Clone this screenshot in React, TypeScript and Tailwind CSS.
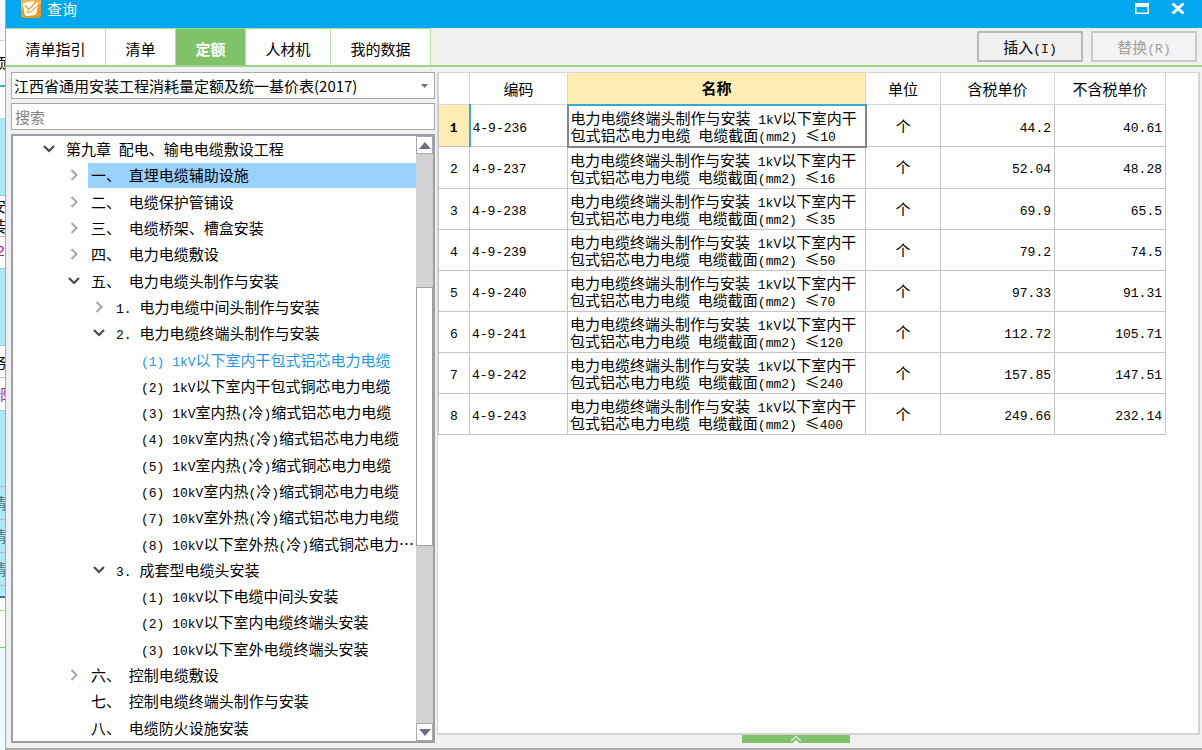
import React, { useState } from "react";

const ASCII_RUN = /([\x20-\x7e]+)/;

/** Mixed text: Chinese in the page font, Latin runs in a half-width mono face. */
function Mixed({ text }: { text: string }) {
  return (
    <span className="whitespace-pre">
      {text.split(ASCII_RUN).map((part, i) =>
        i % 2 === 1 ? (
          <span key={i} className="font-['Liberation_Mono',monospace] text-[13px] leading-[10px]">
            {part}
          </span>
        ) : (
          part
        ),
      )}
    </span>
  );
}

const TABS = [
  { name: "清单指引", width: "w-[100px]" },
  { name: "清单", width: "w-[70px]" },
  { name: "定额", width: "w-[70px]" },
  { name: "人材机", width: "w-[85px]" },
  { name: "我的数据", width: "w-[100px]" },
];

type Node = { level: number; text: string; state?: "open" | "closed" };

const NODES: Node[] = [
  { level: 0, text: "第九章 配电、输电电缆敷设工程", state: "open" },
  { level: 1, text: "一、 直埋电缆辅助设施", state: "closed" },
  { level: 1, text: "二、 电缆保护管铺设", state: "closed" },
  { level: 1, text: "三、 电缆桥架、槽盒安装", state: "closed" },
  { level: 1, text: "四、 电力电缆敷设", state: "closed" },
  { level: 1, text: "五、 电力电缆头制作与安装", state: "open" },
  { level: 2, text: "1. 电力电缆中间头制作与安装", state: "closed" },
  { level: 2, text: "2. 电力电缆终端头制作与安装", state: "open" },
  { level: 3, text: "(1) 1kV以下室内干包式铝芯电力电缆" },
  { level: 3, text: "(2) 1kV以下室内干包式铜芯电力电缆" },
  { level: 3, text: "(3) 1kV室内热(冷)缩式铝芯电力电缆" },
  { level: 3, text: "(4) 10kV室内热(冷)缩式铝芯电力电缆" },
  { level: 3, text: "(5) 1kV室内热(冷)缩式铜芯电力电缆" },
  { level: 3, text: "(6) 10kV室内热(冷)缩式铜芯电力电缆" },
  { level: 3, text: "(7) 10kV室外热(冷)缩式铝芯电力电缆" },
  { level: 3, text: "(8) 10kV以下室外热(冷)缩式铜芯电力…" },
  { level: 2, text: "3. 成套型电缆头安装", state: "open" },
  { level: 3, text: "(1) 10kV以下电缆中间头安装" },
  { level: 3, text: "(2) 10kV以下室内电缆终端头安装" },
  { level: 3, text: "(3) 10kV以下室外电缆终端头安装" },
  { level: 1, text: "六、 控制电缆敷设", state: "closed" },
  { level: 1, text: "七、 控制电缆终端头制作与安装" },
  { level: 1, text: "八、 电缆防火设施安装" },
];

const INDENT = ["pl-[28px]", "pl-[53px]", "pl-[78px]", "pl-[103px]"];

const ROWS = [
  { code: "4-9-236", size: "10", taxed: "44.2", untaxed: "40.61" },
  { code: "4-9-237", size: "16", taxed: "52.04", untaxed: "48.28" },
  { code: "4-9-238", size: "35", taxed: "69.9", untaxed: "65.5" },
  { code: "4-9-239", size: "50", taxed: "79.2", untaxed: "74.5" },
  { code: "4-9-240", size: "70", taxed: "97.33", untaxed: "91.31" },
  { code: "4-9-241", size: "120", taxed: "112.72", untaxed: "105.71" },
  { code: "4-9-242", size: "240", taxed: "157.85", untaxed: "147.51" },
  { code: "4-9-243", size: "400", taxed: "249.66", untaxed: "232.14" },
];

/** Edge of the worksheet that stays visible behind the dialog. */
function Backdrop() {
  const line = "shrink-0 overflow-hidden border-b flex items-center whitespace-nowrap text-[15px]";
  return (
    <div className="flex w-[5px] shrink-0 flex-col overflow-hidden bg-white" aria-hidden="true">
      <div className={`${line} h-[41px] border-[#d0d0d0] bg-[#f6f8fb]`} />
      <div className={`${line} h-[46px] border-b-2 border-[#35a9dc]`}>
        <span className="-ml-2">项</span>
      </div>
      <div className={`${line} h-[32px] border-[#d0d0d0]`} />
      <div className={`${line} h-[77px] border-[#b8b8b8] bg-[#aee8fb]`} />
      <div className={`${line} h-[41px] flex-col justify-center border-[#b8b8b8]`}>
        <span className="-ml-2">安</span>
        <span className="-ml-2">装</span>
      </div>
      <div className={`${line} h-[32px] border-[#b8b8b8] font-['Liberation_Mono',monospace] text-[#a020a0]`}>
        <span className="-ml-1">25</span>
      </div>
      <div className={`${line} h-[77px] border-[#b8b8b8] bg-[#aee8fb]`} />
      <div className={`${line} h-[32px] border-[#b8b8b8]`}>
        <span className="-ml-2">务</span>
      </div>
      <div className={`${line} h-[33px] border-[#b8b8b8] text-[#a020a0]`}>
        <span className="-ml-2">部</span>
      </div>
      <div className={`${line} h-[76px] border-[#b8b8b8] bg-[#aee8fb]`} />
      {[0, 1, 2].map((i) => (
        <div key={i} className={`${line} h-[33px] border-[#b8b8b8] bg-[#aee8fb] text-[#4b7683]`}>
          <span className="-ml-2">清</span>
        </div>
      ))}
      <div className={`${line} h-[12px] border-b-2 border-[#3f7482] bg-[#aee8fb]`} />
      <div className={`${line} h-[13px] border-[#9ed98d]`} />
      <div className={`${line} h-[37px] border-[#8ccb7a]`} />
      <div className="flex-1 bg-[#eefbff]" />
    </div>
  );
}

function TitleBar() {
  return (
    <header className="flex h-7 shrink-0 items-start bg-[#00a8f0] pr-4 pl-[15px] text-white">
      <svg width="20" height="18" viewBox="0 0 20 18" aria-hidden="true">
        <path d="M0 0H20V15Q20 18 17 18H3Q0 18 0 15Z" fill="#f79a1a" />
        <path d="M0 0H20V5Q10 3 0 9Z" fill="#fbb744" />
        <path d="M2 3.500L12 1L17 5L15.500 13Q15 15 13 15.200L6 16Q4 16 3.500 14Z" fill="#fff" />
        <path d="M4 5L7.500 9.500L17 0" fill="none" stroke="#f79a1a" strokeWidth="1.200" />
        <path d="M6.500 13L7.500 10L16 1.500L18.500 3.500L10 12Z" fill="#fff" stroke="#f79a1a" strokeWidth="1" />
      </svg>
      <h1 className="ml-1.5 text-[15px] leading-[18px]">查询</h1>
      <div className="ml-auto flex gap-[20px] pt-0.5">
        <button type="button" aria-label="还原" className="flex h-3 w-4 items-center justify-center">
          <svg width="14" height="11" viewBox="0 0 14 11">
            <path d="M0 0H14V11H0ZM1.500 4V9.500H12.500V4Z" fill="#fff" fillRule="evenodd" />
          </svg>
        </button>
        <button type="button" aria-label="关闭" className="flex h-3 w-4 items-center justify-center">
          <svg width="14" height="11" viewBox="0 0 14 11">
            <path d="M1.500 0.500L12.500 10.500M12.500 0.500L1.500 10.500" stroke="#fff" strokeWidth="3" />
          </svg>
        </button>
      </div>
    </header>
  );
}

function TabBar() {
  const [active, setActive] = useState(2);
  const action = "h-[31px] w-[106px] border-2";
  return (
    <div className="flex shrink-0 border-b-2 border-[#9bd589] bg-[#f0f0f0] pr-[5px]">
      <div role="tablist" className="flex h-[37px] border-t border-[#a8dd99]">
        {TABS.map((tab, i) => (
          <button
            key={tab.name}
            type="button"
            role="tab"
            aria-selected={i === active}
            onClick={() => setActive(i)}
            className={`${tab.width} border-r border-[#b0e0a2] pt-1 ${
              i === active ? "bg-[#80c269] font-bold text-white" : "bg-white"
            }`}
          >
            {tab.name}
          </button>
        ))}
      </div>
      <div className="ml-auto flex items-center gap-2">
        <button type="button" className={`${action} border-[#b9b9b9]`}>
          <Mixed text="插入(I)" />
        </button>
        <button type="button" disabled className={`${action} border-[#cacaca] bg-[#f3f3f3] text-[#a0a0a0]`}>
          <Mixed text="替换(R)" />
        </button>
      </div>
    </div>
  );
}

function Chevron({ open }: { open: boolean }) {
  return open ? (
    <svg width="12" height="8" viewBox="0 0 12 8" aria-hidden="true">
      <path d="M1 1L6 6L11 1" fill="none" stroke="#4a4a4a" strokeWidth="2.200" />
    </svg>
  ) : (
    <svg width="8" height="12" viewBox="0 0 8 12" aria-hidden="true">
      <path d="M1.500 1L6.500 6L1.500 11" fill="none" stroke="#a6a6a6" strokeWidth="2" />
    </svg>
  );
}

function ScrollBar() {
  const cap = "flex h-[18px] w-full shrink-0 items-center justify-center border border-[#aaaaaa] bg-white";
  return (
    <div className="flex w-[17px] shrink-0 flex-col bg-[#d2d2d2]">
      <button type="button" aria-label="向上滚动" className={cap}>
        <svg width="12" height="7" viewBox="0 0 12 7">
          <path d="M6 0L12 7H0Z" fill="#6b7080" />
        </svg>
      </button>
      <div className="flex-[134]" />
      <div className="flex-[258] border border-[#a0a0a0] bg-white" />
      <div className="flex-[178]" />
      <button type="button" aria-label="向下滚动" className={cap}>
        <svg width="12" height="7" viewBox="0 0 12 7">
          <path d="M0 0H12L6 7Z" fill="#6b7080" />
        </svg>
      </button>
    </div>
  );
}

function Catalogue() {
  const [selected, setSelected] = useState(1);
  return (
    <aside className="flex w-[424px] shrink-0 flex-col gap-1 pt-[5px] pb-[5px]">
      <div className="relative">
        <select
          aria-label="定额库"
          className="block h-[27px] w-full appearance-none border border-[#a8a8a8] bg-white pl-0.5 outline-none"
        >
          <option>江西省通用安装工程消耗量定额及统一基价表(2017)</option>
        </select>
        <svg
          width="7"
          height="4"
          viewBox="0 0 7 4"
          className="pointer-events-none absolute top-3 right-[7px]"
          aria-hidden="true"
        >
          <path d="M0 0H7L3.500 4Z" fill="#6b7080" />
        </svg>
      </div>
      <input
        type="text"
        aria-label="搜索"
        placeholder="搜索"
        className="h-[27px] w-full border border-[#a8a8a8] bg-white px-[3px] outline-none placeholder:text-[#858585]"
      />
      <div className="flex flex-1 border-2 border-[#9a9fa8] bg-white">
        <ul role="tree" aria-label="定额目录" className="flex min-w-0 flex-1 flex-col">
          {NODES.map((node, i) => (
            <li
              key={i}
              role="treeitem"
              aria-level={node.level + 1}
              aria-selected={i === selected}
              aria-expanded={node.state ? node.state === "open" : undefined}
              className={`${INDENT[node.level]} flex flex-1 items-center gap-1.5`}
            >
              <span className="flex w-4 shrink-0 items-center justify-center">
                {node.state && <Chevron open={node.state === "open"} />}
              </span>
              <button
                type="button"
                onClick={() => setSelected(i)}
                className={`h-[25px] flex-1 overflow-hidden px-[3px] text-left ${
                  i === selected ? "bg-[#99d1ff]" : ""
                } ${i === 8 ? "text-[#1e96f0]" : ""}`}
              >
                <Mixed text={node.text} />
              </button>
            </li>
          ))}
        </ul>
        <ScrollBar />
      </div>
    </aside>
  );
}

function QuotaTable() {
  const cell = "border border-[#c4c4c4] p-0";
  const head = "border border-[#d6d6d6] p-0 font-normal";
  return (
    <main className="flex min-w-0 flex-1 flex-col pt-[5px]">
      <div className="flex-1 border border-r-2 border-b-2 border-[#d4d4d4] bg-white pr-8">
        <table className="-mt-px h-[363px] w-full table-fixed border-collapse">
          <colgroup>
            <col className="w-[31px]" />
            <col className="w-[98px]" />
            <col />
            <col className="w-[75px]" />
            <col className="w-[114px]" />
            <col className="w-[111px]" />
          </colgroup>
          <thead>
            <tr className="h-[32px]">
              <th className={head} aria-label="序号" />
              <th className={head}>编码</th>
              <th className="border border-b-2 border-[#d6d6d6] border-b-[#35a9dc] bg-[#ffecb3] p-0 font-bold">
                名称
              </th>
              <th className={head}>单位</th>
              <th className={head}>含税单价</th>
              <th className={head}>不含税单价</th>
            </tr>
          </thead>
          <tbody>
            {ROWS.map((row, i) => (
              <tr key={row.code}>
                <td
                  className={`text-center ${
                    i === 0
                      ? "border border-r-2 border-[#c4c4c4] border-r-[#35a9dc] bg-[#ffecb3] p-0 font-bold"
                      : cell
                  }`}
                >
                  <Mixed text={String(i + 1)} />
                </td>
                <td className={`${cell} pl-0.5`}>
                  <Mixed text={row.code} />
                </td>
                <td
                  className={`pl-0.5 leading-[17px] ${
                    i === 0 ? "border-2 border-[#858585] border-t-[#35a9dc] p-0" : cell
                  }`}
                >
                  <Mixed text="电力电缆终端头制作与安装 1kV以下室内干" />
                  <br />
                  <Mixed text={`包式铝芯电力电缆 电缆截面(mm2) ≤${row.size}`} />
                </td>
                <td className={`${cell} text-center`}>个</td>
                <td className={`${cell} pr-[3px] text-right`}>
                  <Mixed text={row.taxed} />
                </td>
                <td className={`${cell} pr-[3px] text-right`}>
                  <Mixed text={row.untaxed} />
                </td>
              </tr>
            ))}
          </tbody>
        </table>
      </div>
      <div className="flex h-[13px] shrink-0 justify-center pr-[46px]">
        <button
          type="button"
          aria-label="展开"
          className="flex h-2 w-[108px] items-center justify-center bg-[#80c269]"
        >
          <svg width="12" height="8" viewBox="0 0 12 8">
            <path d="M1 6L6 1.500L11 6" fill="none" stroke="#d5ecce" strokeWidth="1.500" />
            <path d="M3 8L6 5L9 8Z" fill="#fff" />
          </svg>
        </button>
      </div>
    </main>
  );
}

export default function App() {
  return (
    <div
      lang="zh-CN"
      className="flex min-h-screen bg-[#f0f0f0] font-['Noto_Sans_CJK_SC',sans-serif] text-[15px] leading-5 text-black"
    >
      <Backdrop />
      <div className="flex min-w-0 flex-1 flex-col border-b-2 border-l border-[#a8a8a8]">
        <TitleBar />
        <TabBar />
        <div className="flex flex-1 gap-0.5 pr-0.5 pl-[5px]">
          <Catalogue />
          <QuotaTable />
        </div>
      </div>
    </div>
  );
}
